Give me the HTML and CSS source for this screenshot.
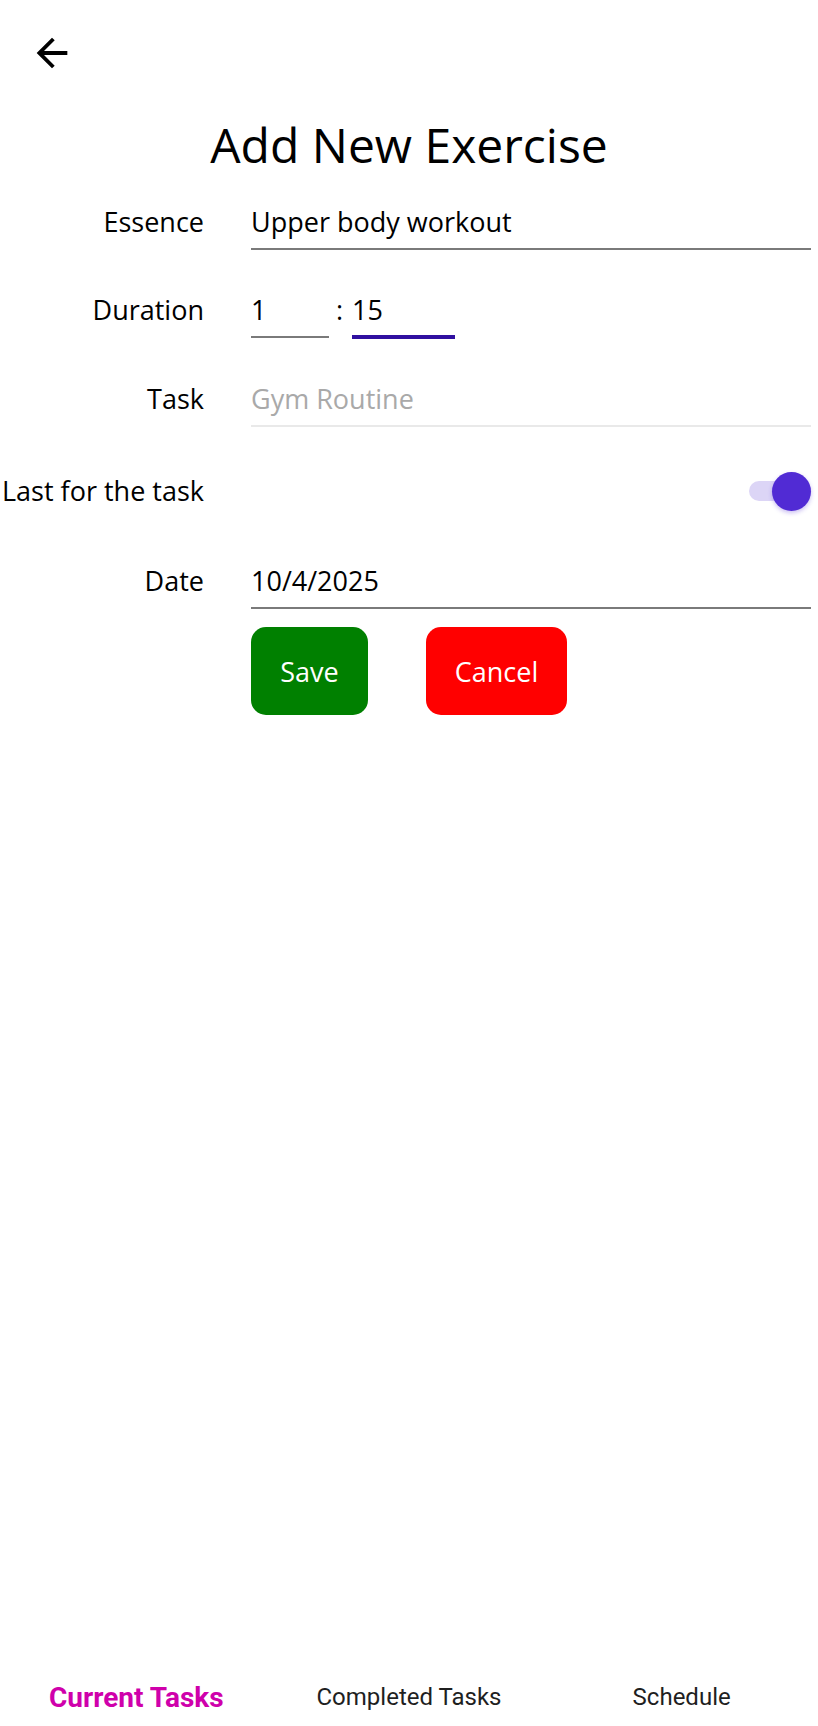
FILE: index.html
```html
<!DOCTYPE html>
<html lang="en">
<head>
<meta charset="utf-8">
<title>Add New Exercise</title>
<link rel="stylesheet" href="styles.css">
</head>
<body>
<div class="page">
  <header class="topbar">
    <button class="back" aria-label="Back">
      <svg viewBox="0 0 24 24" width="46" height="46"><path d="M20 11H7.83l5.59-5.59L12 4l-8 8 8 8 1.41-1.41L7.83 13H20v-2z" fill="#000"/></svg>
    </button>
  </header>
  <h1 class="title">Add New Exercise</h1>
  <main class="form">
    <div class="row">
      <div class="label">Essence</div>
      <div class="field"><span class="value">Upper body workout</span></div>
    </div>
    <div class="row">
      <div class="label">Duration</div>
      <div class="duration">
        <div class="field hours"><span class="value">1</span></div>
        <span class="colon">:</span>
        <div class="field minutes focused"><span class="value">15</span></div>
      </div>
    </div>
    <div class="row">
      <div class="label">Task</div>
      <div class="field disabled"><span class="value placeholder">Gym Routine</span></div>
    </div>
    <div class="row toggle-row">
      <div class="label">Last for the task</div>
      <div class="switch-cell">
        <div class="switch"><span class="track"></span><span class="thumb"></span></div>
      </div>
    </div>
    <div class="row">
      <div class="label">Date</div>
      <div class="field"><span class="value">10/4/2025</span></div>
    </div>
    <div class="actions">
      <button class="btn save">Save</button>
      <button class="btn cancel">Cancel</button>
    </div>
  </main>
  <nav class="tabs">
    <div class="tab active">Current Tasks</div>
    <div class="tab">Completed Tasks</div>
    <div class="tab">Schedule</div>
  </nav>
</div>
</body>
</html>
```
FILE: styles.css
```css
html, body {
  margin: 0;
  padding: 0;
  background: #fff;
}
body {
  font-family: "Open Sans", "Noto Sans", sans-serif;
  color: #000;
}
.page {
  width: 818px;
  height: 1726px;
  display: flex;
  flex-direction: column;
}
.topbar {
  height: 113px;
  padding-left: 29px;
  padding-top: 30px;
  box-sizing: border-box;
}
.back {
  border: 0;
  background: none;
  padding: 0;
  width: 46px;
  height: 46px;
  display: block;
}
.back svg { display: block; }
.title {
  margin: 0;
  font-weight: 400;
  font-size: 48px;
  line-height: 64px;
  text-align: center;
}
.form {
  flex: 1;
  padding-top: 17px;
}
.row {
  display: grid;
  grid-template-columns: 204px 560px;
  column-gap: 47px;
  align-items: start;
  margin-bottom: 32px;
}
.label {
  font-size: 27px;
  line-height: 36px;
  padding-top: 10px;
  text-align: right;
  white-space: nowrap;
}
.field {
  padding-top: 10px;
  padding-bottom: 8px;
  border-bottom: 2px solid #7a7a7a;
}
.value {
  display: block;
  font-size: 27px;
  line-height: 36px;
  color: #000;
}
.value.placeholder { color: #a9a9a9; }
.field.disabled { border-bottom: 2px solid #e9e9e9; }
.duration {
  display: flex;
  align-items: flex-start;
}
.hours { width: 78px; }
.colon {
  font-size: 27px;
  line-height: 36px;
  padding-top: 10px;
  margin-left: 7px;
  margin-right: 9px;
}
.minutes { width: 103px; }
.field.focused {
  padding-bottom: 7px;
  border-bottom: 4px solid #3010a0;
}
.toggle-row {
  margin-bottom: 0;
  height: 94px;
}
.toggle-row .label { padding-top: 14px; }
.switch-cell {
  display: flex;
  justify-content: flex-end;
  padding-top: 14px;
  height: 36px;
  align-items: center;
}
.switch {
  position: relative;
  width: 62px;
  height: 40px;
}
.track {
  position: absolute;
  left: 0;
  top: 10px;
  width: 50px;
  height: 20px;
  border-radius: 10px;
  background: #dcd5f6;
}
.thumb {
  position: absolute;
  right: 0;
  top: 1px;
  width: 39px;
  height: 39px;
  border-radius: 50%;
  background: #512bd4;
  box-shadow: 0 2px 4px rgba(81, 43, 212, 0.3);
}
.actions {
  display: flex;
  gap: 58px;
  margin-left: 251px;
  margin-top: -14px;
}
.btn {
  height: 88px;
  border: 0;
  border-radius: 15px;
  font-family: "Open Sans", "Noto Sans", sans-serif;
  font-size: 27px;
  color: #fff;
  padding: 0;
}
.save { background: #008000; width: 117px; }
.cancel { background: #ff0000; width: 141px; }
.tabs {
  display: grid;
  grid-template-columns: 1fr 1fr 1fr;
  height: 58px;
  align-items: center;
}
.tab {
  text-align: center;
  font-family: Roboto, "Liberation Sans", sans-serif;
  font-size: 24px;
  color: #1f1f1f;
}
.tab.active {
  color: #cf00ab;
  font-weight: 700;
  font-size: 28px;
}
```
